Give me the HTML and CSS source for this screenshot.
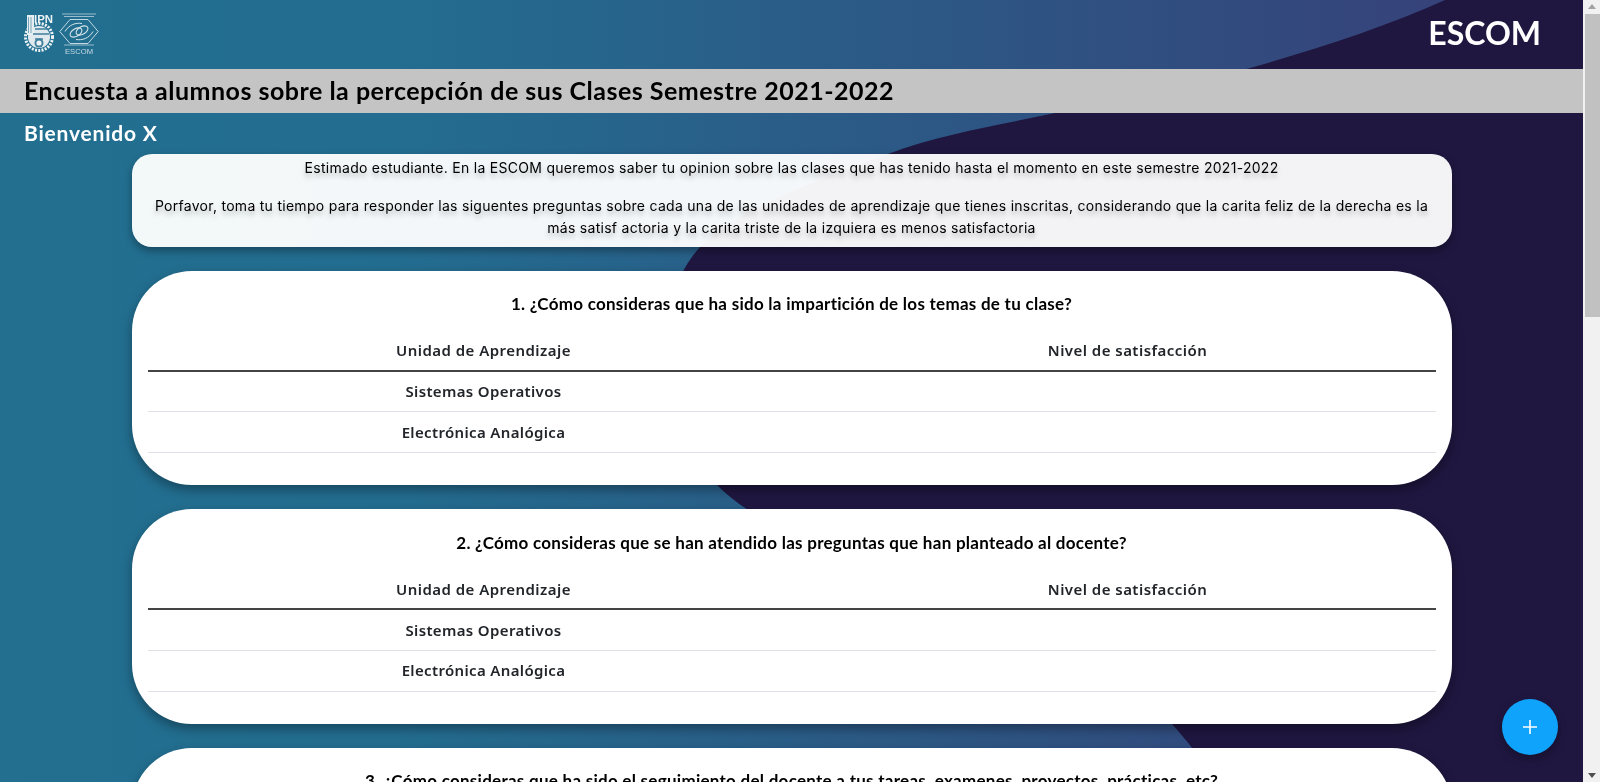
FILE: index.html
```html
<!DOCTYPE html>
<html lang="es">
<head>
<meta charset="utf-8">
<title>Encuesta ESCOM</title>
<link rel="stylesheet" href="styles.css">
</head>
<body>
<svg class="backdrop" viewBox="0 0 1583 782" preserveAspectRatio="none" aria-hidden="true">
  <defs>
    <linearGradient id="bg" x1="0" y1="0" x2="1" y2="0">
      <stop offset="0" stop-color="#226f90"/>
      <stop offset="0.25" stop-color="#236d90"/>
      <stop offset="0.92" stop-color="#36427a"/>
    </linearGradient>
  </defs>
  <rect width="1583" height="782" fill="url(#bg)"/>
  <path fill="#1f1740" d="M1445 0C1385 27 1320 48 1250 68C1190 85 1120 97 1055 113C1000 125 940 134 888 154C820 180 745 205 700 247C670 280 660 330 672 400C680 440 695 462 717 485C800 570 1080 620 1172 724C1195 750 1205 765 1218 782H1583V0Z"/>
</svg>

<div class="page">
<header class="topbar">
  <div class="logos">
    <svg class="logo-ipn" viewBox="0 0 30 40" aria-hidden="true">
      <circle cx="15" cy="24" r="13.5" fill="none" stroke="#eef4f6" stroke-width="3" stroke-dasharray="2 1.3"/>
      <circle cx="15" cy="24" r="11" fill="#dfe9ee"/>
      <rect x="3" y="2" width="7" height="20" fill="#e6eef2"/>
      <path d="M4.5 4v16M7 4v16" stroke="#5d93ab" stroke-width=".8"/>
      <path d="M11 16h14M9 21h16M11 26h8" stroke="#3f7f9c" stroke-width="1.3"/>
      <circle cx="15" cy="30" r="4.5" fill="#3f7f9c"/>
      <circle cx="15" cy="30" r="2.6" fill="#eef4f6"/>
      <text x="10" y="10" textLength="19" lengthAdjust="spacingAndGlyphs" class="logo-ipn-text">IPN</text>
    </svg>
    <svg class="logo-escom" viewBox="0 0 40 40" aria-hidden="true">
      <path d="M3 .5h34M5 3h30" stroke="#a9c5d2" stroke-width=".9"/>
      <path d="M.8 18 11 6h18l10.200 12L29 30H11Z" fill="none" stroke="#d6e4ea" stroke-width=".9" stroke-linejoin="round"/>
      <path d="M6 18c4-7 11-9 17-8M34 18c-4 7-11 9-17 8" fill="none" stroke="#d6e4ea" stroke-width="1"/>
      <ellipse cx="17" cy="19" rx="6.500" ry="3.800" transform="rotate(-30 17 19)" fill="none" stroke="#d6e4ea" stroke-width="1.100"/>
      <ellipse cx="23" cy="17" rx="6.500" ry="3.800" transform="rotate(-30 23 17)" fill="none" stroke="#d6e4ea" stroke-width="1.100"/>
      <path d="M5 31.500h30" stroke="#a9c5d2" stroke-width=".9"/>
      <text x="6" y="40" textLength="28" lengthAdjust="spacingAndGlyphs" class="logo-escom-text">ESCOM</text>
    </svg>
  </div>
  <div class="brand">ESCOM</div>
</header>

<div class="titlebar"><h1 class="survey-title">Encuesta a alumnos sobre la percepción de sus Clases Semestre 2021-2022</h1></div>
<h2 class="welcome">Bienvenido X</h2>

<main class="content">
  <section class="notice">
    <p>Estimado estudiante. En la ESCOM queremos saber tu opinion sobre las clases que has tenido hasta el momento en este semestre 2021-2022</p>
    <p>Porfavor, toma tu tiempo para responder las siguentes preguntas sobre cada una de las unidades de aprendizaje que tienes inscritas, considerando que la carita feliz de la derecha es la más satisf actoria y la carita triste de la izquiera es menos satisfactoria</p>
  </section>

  <section class="question">
    <h3 class="question-title">1. ¿Cómo consideras que ha sido la impartición de los temas de tu clase?</h3>
    <table class="rating">
      <thead><tr><th class="col-subject">Unidad de Aprendizaje</th><th>Nivel de satisfacción</th></tr></thead>
      <tbody>
        <tr><td>Sistemas Operativos</td><td></td></tr>
        <tr><td>Electrónica Analógica</td><td></td></tr>
      </tbody>
    </table>
  </section>

  <section class="question">
    <h3 class="question-title">2. ¿Cómo consideras que se han atendido las preguntas que han planteado al docente?</h3>
    <table class="rating">
      <thead><tr><th class="col-subject">Unidad de Aprendizaje</th><th>Nivel de satisfacción</th></tr></thead>
      <tbody>
        <tr><td>Sistemas Operativos</td><td></td></tr>
        <tr><td>Electrónica Analógica</td><td></td></tr>
      </tbody>
    </table>
  </section>

  <section class="question">
    <h3 class="question-title">3. ¿Cómo consideras que ha sido el seguimiento del docente a tus tareas, examenes, proyectos, prácticas, etc?</h3>
    <table class="rating">
      <thead><tr><th class="col-subject">Unidad de Aprendizaje</th><th>Nivel de satisfacción</th></tr></thead>
      <tbody>
        <tr><td>Sistemas Operativos</td><td></td></tr>
        <tr><td>Electrónica Analógica</td><td></td></tr>
      </tbody>
    </table>
  </section>
</main>
</div>

<button class="fab" type="button" aria-label="Agregar">
  <svg viewBox="0 0 14 14" class="fab-icon" aria-hidden="true"><path d="M7 0v14M0 7h14" stroke="#fff" stroke-width="1.6"/></svg>
</button>

<div class="scrollbar" aria-hidden="true">
  <span class="scroll-arrow scroll-up"></span>
  <span class="scroll-thumb"></span>
  <span class="scroll-arrow scroll-down"></span>
</div>
</body>
</html>
```

FILE: styles.css
```css
* { box-sizing: border-box; }
html::-webkit-scrollbar { display: none; }

body { margin: 0; font-family: "Lato", "Liberation Sans", sans-serif; color: #000; }

.page { width: 1583px; }

.backdrop { position: fixed; left: 0; top: 0; width: 1583px; height: 100vh; z-index: -1; }

.topbar { height: 69px; display: flex; align-items: flex-start; justify-content: space-between; padding: 13px 42px 0 24px; }
.logos { display: flex; gap: 5px; }
.logo-ipn { width: 30px; height: 40px; }
.logo-escom { width: 40px; height: 41px; overflow: visible; }
.logo-ipn-text { font: 700 10px "Liberation Sans", sans-serif; fill: #eef4f6; }
.logo-escom-text { font: 7.500px "Liberation Sans", sans-serif; fill: #c9dbe3; }
.brand { color: #fff; font-family: "Lato", sans-serif; font-weight: 700; font-size: 32px; line-height: 40px; letter-spacing: 0; }

.titlebar { height: 44px; background: #c4c4c4; padding: 0 24px 2px; display: flex; align-items: center; }
.survey-title { margin: 0; font-family: "Lato", sans-serif; font-weight: 700; font-size: 25px; line-height: 30px; letter-spacing: .5px; }
.welcome { margin: 5px 0 0 24px; height: 36px; font-family: "Lato", sans-serif; font-weight: 700; font-size: 21px; line-height: 29px; color: #fff; letter-spacing: .8px; }

.content { width: 1320px; margin: 0 auto; padding-bottom: 975px; display: flex; flex-direction: column; gap: 24px; }

.notice { background: rgba(255, 255, 255, .95); border-radius: 20px; padding: 3px 16px 8px; height: 93px; box-shadow: 0 4px 8px rgba(0, 0, 0, .35); text-align: center; font-family: "Inter", sans-serif; font-size: 14px; line-height: 22px; letter-spacing: .28px; text-shadow: 0 4px 5px rgba(0, 0, 0, .25); }
.notice p { margin: 0 0 16px; }
.notice p:last-child { margin-bottom: 0; }

.question { background: #fff; border-radius: 60px; height: 214.400px; padding: 21.400px 16px 0; box-shadow: 0 5px 12px rgba(0, 0, 0, .35); }
.question-title { margin: 0 0 14px; text-align: center; font-family: "Lato", sans-serif; font-weight: 700; font-size: 17px; line-height: 24px; letter-spacing: .27px; }

.rating { width: 100%; border-collapse: collapse; font-family: "Noto Sans", sans-serif; color: #212529; text-align: center; font-size: 15px; }
.rating th { height: 40.500px; font-weight: 600; letter-spacing: .46px; border-bottom: 2px solid #444; }
.rating td { height: 41px; padding-bottom: 2px; font-weight: 600; letter-spacing: .35px; border-bottom: 1px solid #dee2e6; }
.col-subject { width: 672px; }

.fab { position: fixed; right: 42px; bottom: 27px; width: 56px; height: 56px; border: 0; border-radius: 50%; background: #0fa3fb; box-shadow: 0 4px 10px rgba(0, 0, 0, .3); display: flex; align-items: center; justify-content: center; padding: 0; }
.fab-icon { width: 14px; height: 14px; }

.scrollbar { position: fixed; top: 0; right: 0; width: 17px; height: 100vh; background: #f1f1f1; display: flex; flex-direction: column; align-items: center; }
.scroll-thumb { width: 15px; height: 303px; margin: 0 0 auto 1px; background: #c1c1c1; }
.scroll-arrow { flex: none; width: 0; height: 0; border-left: 4.500px solid transparent; border-right: 4.500px solid transparent; }
.scroll-up { margin: 4px 0 5px; border-bottom: 5px solid #a3a3a3; }
.scroll-down { margin: 0 0 4px; border-top: 5px solid #505050; }
```
